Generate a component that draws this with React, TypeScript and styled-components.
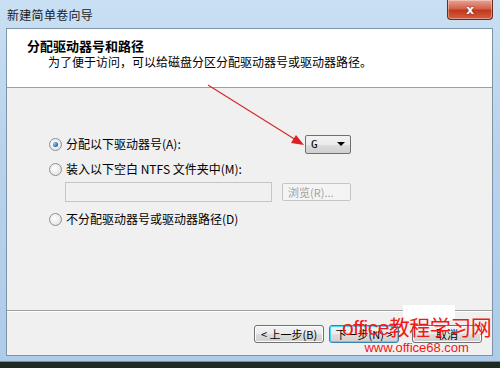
import styled, { createGlobalStyle } from "styled-components";

const GlobalStyle = createGlobalStyle`
  html, body {
    margin: 0;
    padding: 0;
    background: #1f2a22;
  }
  body {
    font-family: "Noto Sans CJK SC", "Liberation Sans", sans-serif;
    font-size: 12px;
    color: #000;
  }
`;

const Frame = styled.div`
  position: relative;
  width: 500px;
  height: 362px;
  display: flex;
  flex-direction: column;
  background: linear-gradient(180deg, #c9dff3 0%, #b9d3ec 40%, #aecbe8 100%);
  border-bottom: 1px solid #6d8aa8;
  box-sizing: border-box;
  overflow: hidden;
`;

const TitleBar = styled.div`
  height: 28px;
  display: flex;
  align-items: center;
  justify-content: space-between;
  padding-left: 7px;
  flex-shrink: 0;
`;

const Title = styled.span`
  font-size: 12px;
  color: #1b1b1b;
  letter-spacing: 0.3px;
`;

const CloseButton = styled.div`
  align-self: flex-start;
  width: 44px;
  height: 19px;
  margin-right: 7px;
  border: 1px solid #6b2a1f;
  border-top: none;
  border-radius: 0 0 4px 4px;
  background: linear-gradient(180deg, #e9a393 0%, #d2634a 45%, #c0391f 55%, #d4603f 100%);
  display: flex;
  align-items: center;
  justify-content: center;
  color: #fff;
  font-family: "DejaVu Sans", sans-serif;
  font-weight: bold;
  font-size: 12px;
  text-shadow: 0 0 2px #5a1a10;
  box-shadow: inset 0 0 0 1px rgba(255, 255, 255, 0.35);
`;

const Client = styled.div`
  flex: 1;
  margin: 0 7px 5px 6px;
  border: 1px solid #7f93a8;
  background: #f0f0f0;
  display: flex;
  flex-direction: column;
`;

const Header = styled.div`
  height: 59px;
  background: #fff;
  border-bottom: 1px solid #a0a0a0;
  padding: 8px 0 0 20px;
  box-sizing: border-box;
  flex-shrink: 0;
`;

const HeaderTitle = styled.div`
  font-weight: bold;
  font-size: 13px;
  line-height: 17px;
`;

const HeaderText = styled.div`
  padding-left: 21px;
  line-height: 15px;
`;

const Body = styled.div`
  flex: 1;
  padding: 46px 0 0 42px;
  display: flex;
  flex-direction: column;
  border-bottom: 1px solid #a0a0a0;
  box-shadow: 0 1px 0 #fff;
`;

const OptionRow = styled.div<{ $gap?: number }>`
  display: flex;
  align-items: center;
  height: 20px;
  margin-top: ${(p) => p.$gap ?? 0}px;
`;

const Radio = styled.span<{ $checked?: boolean }>`
  width: 11px;
  height: 11px;
  border-radius: 50%;
  border: 1px solid #8e8f8f;
  background: radial-gradient(circle at 40% 40%, #ffffff 0%, #e6e6e6 70%, #d0d0d0 100%);
  margin-right: 4px;
  display: flex;
  align-items: center;
  justify-content: center;
  flex-shrink: 0;

  &::after {
    content: "";
    display: ${(p) => (p.$checked ? "block" : "none")};
    width: 5px;
    height: 5px;
    border-radius: 50%;
    background: radial-gradient(circle at 35% 35%, #8fd0f7 0%, #2a6fb3 60%, #1c4f88 100%);
  }
`;

const Label = styled.span`
  white-space: nowrap;
  line-height: 16px;
`;

const Spacer = styled.div`
  flex: 1;
`;

const Combo = styled.div`
  width: 46px;
  height: 19px;
  box-sizing: border-box;
  margin-right: 141px;
  border: 1px solid #707070;
  border-radius: 2px;
  background: linear-gradient(180deg, #f2f2f2 0%, #ebebeb 50%, #dddddd 51%, #cfcfcf 100%);
  display: flex;
  align-items: center;
  justify-content: space-between;
  padding: 0 5px 0 5px;
  font-family: "DejaVu Sans Mono", monospace;
  font-size: 11px;
`;

const Caret = styled.span`
  width: 0;
  height: 0;
  border-left: 4px solid transparent;
  border-right: 4px solid transparent;
  border-top: 4px solid #000;
`;

const PathRow = styled.div`
  display: flex;
  align-items: center;
  gap: 10px;
  margin: 3px 0 0 16px;
`;

const TextBox = styled.div`
  width: 205px;
  height: 18px;
  border: 1px solid #c5c5c5;
  background: #f0f0f0;
`;

const DisabledButton = styled.div`
  width: 69px;
  height: 18px;
  border: 1px solid #c5c5c5;
  border-radius: 2px;
  background: #f4f4f4;
  color: #a0a0a0;
  display: flex;
  align-items: center;
  padding-left: 5px;
  box-sizing: border-box;
  font-size: 11px;
`;

const Footer = styled.div`
  height: 44px;
  display: flex;
  align-items: center;
  justify-content: flex-end;
  padding: 2px 10px 0 0;
  gap: 5px;
  box-sizing: border-box;
  flex-shrink: 0;
`;

const Button = styled.div<{ $focused?: boolean; $wide?: number }>`
  width: ${(p) => p.$wide ?? 70}px;
  height: 18px;
  border: 1px solid ${(p) => (p.$focused ? "#3c7fb1" : "#707070")};
  border-radius: 3px;
  background: linear-gradient(180deg, #f2f2f2 0%, #ebebeb 50%, #dddddd 51%, #cfcfcf 100%);
  box-shadow: ${(p) => (p.$focused ? "inset 0 0 0 1px #48d8fb" : "inset 0 0 0 1px #fcfcfc")};
  display: flex;
  align-items: center;
  justify-content: center;
  font-size: 11px;
  line-height: 1;
  box-sizing: border-box;
`;

const CancelButton = styled(Button)`
  margin-left: 8px;
`;

const Overlay = styled.svg`
  position: absolute;
  left: 0;
  top: 0;
  pointer-events: none;
`;

const WatermarkPatch = styled.div`
  position: absolute;
  left: 403px;
  top: 305px;
  width: 52px;
  height: 15px;
  background: #fff;
`;

const Watermark = styled.div`
  position: absolute;
  left: 342px;
  top: 317px;
  display: flex;
  flex-direction: column;
  align-items: center;
  color: #f01818;
  line-height: 1;
  font-family: "Liberation Sans", "Noto Sans CJK SC", sans-serif;
`;

const WatermarkTitle = styled.span`
  font-size: 21px;
  letter-spacing: -0.5px;
`;

const WatermarkUrl = styled.span`
  font-size: 13px;
  margin-top: 3px;
`;

export default function App() {
  return (
    <>
      <GlobalStyle />
      <Frame>
        <TitleBar>
          <Title>新建简单卷向导</Title>
          <CloseButton>x</CloseButton>
        </TitleBar>
        <Client>
          <Header>
            <HeaderTitle>分配驱动器号和路径</HeaderTitle>
            <HeaderText>为了便于访问，可以给磁盘分区分配驱动器号或驱动器路径。</HeaderText>
          </Header>
          <Body>
            <OptionRow>
              <Radio $checked />
              <Label>分配以下驱动器号(A):</Label>
              <Spacer />
              <Combo>
                G
                <Caret />
              </Combo>
            </OptionRow>
            <OptionRow $gap={5}>
              <Radio />
              <Label>装入以下空白 NTFS 文件夹中(M):</Label>
            </OptionRow>
            <PathRow>
              <TextBox />
              <DisabledButton>浏览(R)...</DisabledButton>
            </PathRow>
            <OptionRow $gap={7}>
              <Radio />
              <Label>不分配驱动器号或驱动器路径(D)</Label>
            </OptionRow>
          </Body>
          <Footer>
            <Button>&lt; 上一步(B)</Button>
            <Button $focused>下一步(N) &gt;</Button>
            <CancelButton>取消</CancelButton>
          </Footer>
        </Client>
        <Overlay width="500" height="368">
          <line x1="208" y1="85" x2="296" y2="140" stroke="#d42a2a" strokeWidth="1.2" />
          <polygon points="304,145 291,143 296,135" fill="#e02020" />
        </Overlay>
        <WatermarkPatch />
        <Watermark>
          <WatermarkTitle>office教程学习网</WatermarkTitle>
          <WatermarkUrl>www.office68.com</WatermarkUrl>
        </Watermark>
      </Frame>
    </>
  );
}
